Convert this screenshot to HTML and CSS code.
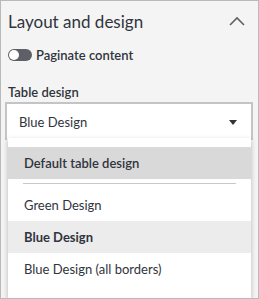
FILE: index.html
```html
<!DOCTYPE html>
<html lang="en">
<head>
    <meta charset="UTF-8">
    <title>Layout and design</title>
    <link rel="stylesheet" href="styles.css">
</head>
<body>
    <div class="panel">
        <!-- Section header -->
        <div class="panel-header">
            <h2>Layout and design</h2>
            <svg class="chevron" width="16" height="10" viewBox="0 0 16 10">
                <path d="M1 9 L8 2 L15 9" fill="none" stroke="#5f6166" stroke-width="1.6"/>
            </svg>
        </div>

        <!-- Paginate toggle -->
        <label class="toggle-row">
            <span class="toggle"><span class="knob"></span></span>
            Paginate content
        </label>

        <!-- Table design select -->
        <div class="field-label">Table design</div>
        <div class="select-wrap">
            <div class="select">
                <span>Blue Design</span>
                <span class="caret"></span>
            </div>

            <ul class="dropdown">
                <li class="option header-opt">Default table design</li>
                <li class="divider"></li>
                <li class="option">Green Design</li>
                <li class="option selected">Blue Design</li>
                <li class="option">Blue Design (all borders)</li>
            </ul>
        </div>
    </div>
</body>
</html>
```

FILE: styles.css
```css
body {
    margin: 0;
    font-family: Lato, "Open Sans", sans-serif;
    color: #30343d;
}

.panel {
    width: 259px;
    height: 299px;
    box-sizing: border-box;
    border: 1px solid #b9b9b9;
    background: #f4f4f4;
    padding: 0 7px;
    overflow: hidden;
}

.panel-header {
    display: flex;
    align-items: center;
    justify-content: space-between;
    height: 40px;
}

.panel-header h2 {
    margin: 0;
    font-size: 17px;
    font-weight: 400;
    color: #30343d;
}

.chevron {
    margin-right: 6px;
}

.toggle-row {
    display: flex;
    align-items: center;
    gap: 4px;
    margin-top: 6px;
    font-size: 13px;
    font-weight: 600;
}

.toggle {
    width: 24px;
    height: 12px;
    border-radius: 6px;
    background: #5d6066;
    position: relative;
}

.knob {
    position: absolute;
    left: 1px;
    top: 1px;
    width: 10px;
    height: 10px;
    border-radius: 50%;
    background: #fff;
}

.field-label {
    margin-top: 21px;
    font-size: 13px;
    font-weight: 600;
}

.select-wrap {
    position: relative;
    margin-top: 2px;
    margin-left: -3px;
    margin-right: -2px;
}

.select {
    display: flex;
    align-items: center;
    justify-content: space-between;
    height: 36px;
    padding: 0 14px 0 12px;
    background: #fff;
    border: 2px solid #c4c4c4;
    border-bottom: none;
    font-size: 13px;
}

.caret {
    width: 0;
    height: 0;
    border-left: 4px solid transparent;
    border-right: 4px solid transparent;
    border-top: 5px solid #333;
}

.dropdown {
    position: absolute;
    left: 3px;
    right: 2px;
    top: 36px;
    margin: 0;
    padding: 9px 0 13px;
    list-style: none;
    background: #fff;
    box-shadow: 0 2px 5px rgba(0, 0, 0, 0.25);
}

.option {
    height: 32px;
    line-height: 32px;
    padding: 0 16px;
    font-size: 13px;
}

.header-opt {
    background: #d9d9d9;
    font-weight: 600;
}

.divider {
    height: 1px;
    background: #c8c8c8;
    margin: 4px 15px 5px;
}

.selected {
    background: #ececec;
    font-weight: 700;
}
```
